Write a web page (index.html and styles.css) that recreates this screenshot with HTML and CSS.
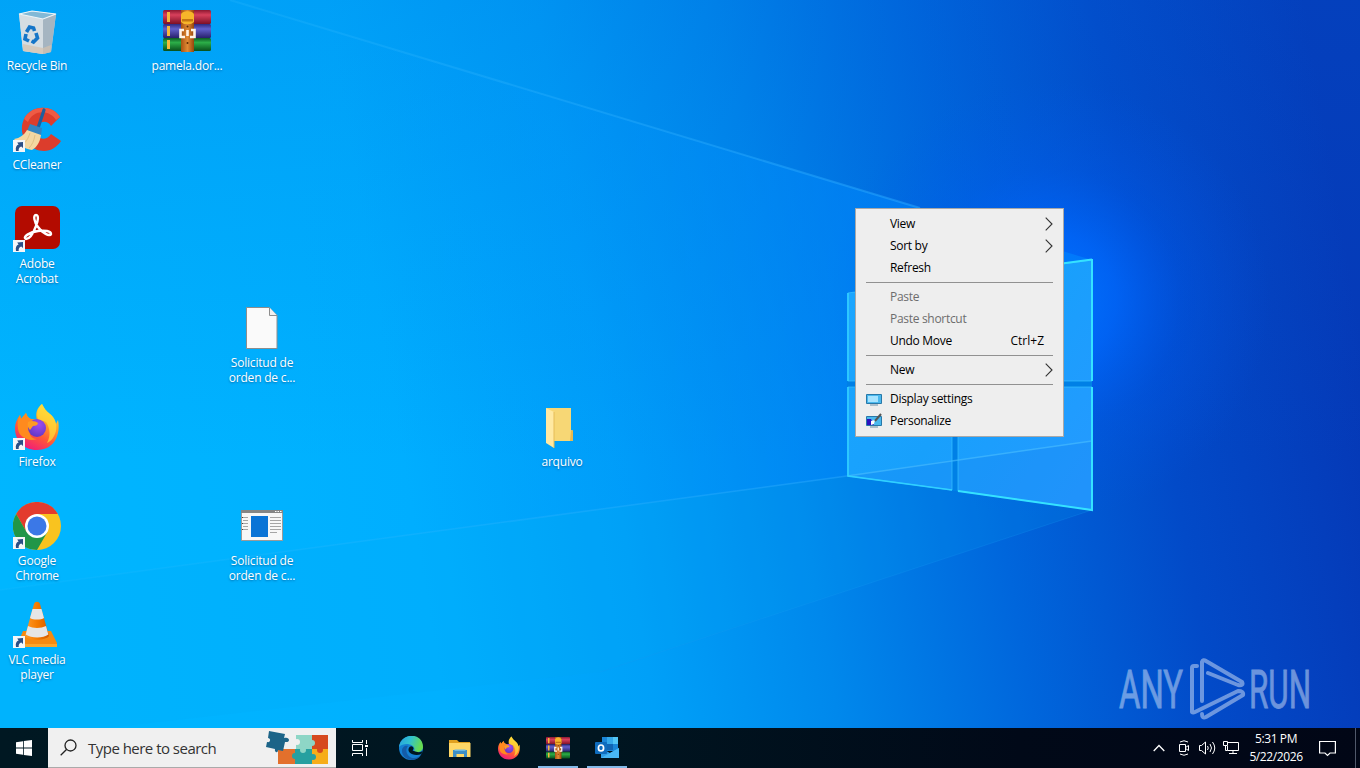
FILE: index.html
```html
<!DOCTYPE html>
<html lang="en">

<head>
    <meta charset="UTF-8">
    <meta name="viewport" content="width=device-width, initial-scale=1.0">
    <title>Desktop</title>

    <link rel="stylesheet" href="styles.css">
</head>

<body>
    <!-- shared icons -->
    <svg class="defs" width="0" height="0">
        <defs>
            <linearGradient id="ffBody" x1="0.8" y1="0" x2="0.3" y2="1">
                <stop offset="0" stop-color="#fff044" />
                <stop offset="0.35" stop-color="#ffa726" />
                <stop offset="0.65" stop-color="#ff5a36" />
                <stop offset="1" stop-color="#f0197d" />
            </linearGradient>
            <radialGradient id="ffGlobe" cx="0.6" cy="0.3" r="0.8">
                <stop offset="0" stop-color="#a04cf0" />
                <stop offset="1" stop-color="#5b36c0" />
            </radialGradient>
            <linearGradient id="rarRed" x1="0" y1="0" x2="0" y2="1">
                <stop offset="0" stop-color="#8c1830" />
                <stop offset="0.35" stop-color="#d8405c" />
                <stop offset="1" stop-color="#7d1026" />
            </linearGradient>
            <linearGradient id="rarBlue" x1="0" y1="0" x2="0" y2="1">
                <stop offset="0" stop-color="#2e2a80" />
                <stop offset="0.35" stop-color="#6260cc" />
                <stop offset="1" stop-color="#28206c" />
            </linearGradient>
            <linearGradient id="rarGreen" x1="0" y1="0" x2="0" y2="1">
                <stop offset="0" stop-color="#0c5a24" />
                <stop offset="0.35" stop-color="#2cae48" />
                <stop offset="1" stop-color="#08501c" />
            </linearGradient>
            <linearGradient id="belt" x1="0" y1="0" x2="1" y2="0">
                <stop offset="0" stop-color="#a85212" />
                <stop offset="0.5" stop-color="#e08a34" />
                <stop offset="1" stop-color="#97450c" />
            </linearGradient>
            <linearGradient id="cone" x1="0" y1="0" x2="1" y2="0">
                <stop offset="0" stop-color="#ff9a2a" />
                <stop offset="0.5" stop-color="#f57c00" />
                <stop offset="1" stop-color="#d45c00" />
            </linearGradient>
        </defs>

        <symbol id="firefox" viewBox="0 0 48 48">
            <path d="M29 1c2 4 4 7 8 10 4 3 5 7 6 10l2-4c3 15-4 30-21 30C10 47 2 37 2 25c0-5 2-9 5-13l1 4 5-6c1 3 2 5 5 6l6 1c-2-7 0-12 5-16z" fill="url(#ffBody)" />
            <path d="M7 12l1 4 5-6c1 3 2 5 5 6l6 1-6 5c-4 8 0 14 6 14-9 3-18-2-19-10-1-6 0-10 2-14z" fill="#ff8a1e" />
            <circle cx="24" cy="25" r="9" fill="url(#ffGlobe)" />
            <path d="M15 19c3-2 8-1 10 1 0 2-2 3-5 3l-3 4c-2-2-3-5-2-8z" fill="#ff9b22" />
            <path d="M29 1c2 4 4 7 8 10 5 4 7 9 6 17-2 7-5 10-9 12 4-7 3-15-1-21l-8-3C23 10 25 5 29 1z" fill="#ffd938" opacity="0.75" />
        </symbol>

        <symbol id="winrar" viewBox="0 0 48 42" preserveAspectRatio="none">
            <rect x="0" y="0" width="48" height="14" rx="1.5" fill="url(#rarRed)" />
            <rect x="0" y="14" width="48" height="14" rx="1.5" fill="url(#rarBlue)" />
            <rect x="0" y="28" width="48" height="13" rx="1.5" fill="url(#rarGreen)" />
            <path d="M4 2h3v10H4zM4 16h3v10H4zM4 30h3v9H4z" fill="#f5b83c" />
            <rect x="18" y="0" width="13" height="42" fill="url(#belt)" />
            <path d="M18 12V5c0-5 13-5 13 0v7l-3 2h-7z" fill="#f7b52a" />
            <path d="M19 9h11v2.500H19z" fill="#c47712" />
            <circle cx="24.5" cy="16.500" r="1" fill="#5b2a05" />
            <path d="M21 20h-3.500v7h4.500M28 20h3.500v7H27M24.500 20v6" fill="none" stroke="#fff3e6" stroke-width="2.600" />
            <circle cx="24.500" cy="33" r="1" fill="#5b2a05" />
        </symbol>

        <symbol id="shortcut" viewBox="0 0 12 12">
            <rect width="12" height="12" fill="#f4f6f8" />
            <path d="M3 11C2.300 7.500 3.300 5.300 5.600 4.500L4.200 2.500 10 2v6L8.300 6.600C6.500 7.200 5.400 8.500 5.700 11z" fill="#2b4f86" />
        </symbol>

        <symbol id="arrow" viewBox="0 0 8 14">
            <path d="M0.700 0.700L7 7 0.700 13.300" fill="none" stroke="#333" stroke-width="1.100" />
        </symbol>
    </svg>

    <div class="desktop">
        <svg class="wallpaper" viewBox="0 0 1360 768" preserveAspectRatio="none">
            <defs>
                <linearGradient id="sky" gradientUnits="userSpaceOnUse" x1="0" y1="560" x2="1360" y2="330">
                    <stop offset="0" stop-color="#00b6ff" />
                    <stop offset="0.3" stop-color="#00b0ff" />
                    <stop offset="0.45" stop-color="#00a0f8" />
                    <stop offset="0.58" stop-color="#0088ec" />
                    <stop offset="0.72" stop-color="#0066dc" />
                    <stop offset="0.85" stop-color="#024ac8" />
                    <stop offset="1" stop-color="#0538b6" />
                </linearGradient>
                <linearGradient id="topShade" x1="0" y1="0" x2="0" y2="1">
                    <stop offset="0" stop-color="#0060d8" stop-opacity="0.2" />
                    <stop offset="0.6" stop-color="#0060d8" stop-opacity="0" />
                </linearGradient>
                <radialGradient id="glow" gradientUnits="userSpaceOnUse" cx="1050" cy="300" r="220">
                    <stop offset="0" stop-color="#0074ff" />
                    <stop offset="0.3" stop-color="#0068ff" stop-opacity="0.75" />
                    <stop offset="0.6" stop-color="#005cf4" stop-opacity="0.3" />
                    <stop offset="1" stop-color="#0058e8" stop-opacity="0" />
                </radialGradient>
                <linearGradient id="beam" gradientUnits="userSpaceOnUse" x1="300" y1="0" x2="900" y2="0">
                    <stop offset="0" stop-color="#0098ff" stop-opacity="0" />
                    <stop offset="0.6" stop-color="#0094ff" stop-opacity="0.25" />
                    <stop offset="1" stop-color="#0088ff" stop-opacity="0.55" />
                </linearGradient>
                <linearGradient id="ray" gradientUnits="userSpaceOnUse" x1="50" y1="0" x2="900" y2="0">
                    <stop offset="0" stop-color="#3cc4ff" stop-opacity="0.1" />
                    <stop offset="1" stop-color="#2aa8ff" stop-opacity="0.5" />
                </linearGradient>
                <linearGradient id="pane" gradientUnits="userSpaceOnUse" x1="847" y1="300" x2="1092" y2="470">
                    <stop offset="0" stop-color="#1ba6ff" />
                    <stop offset="0.5" stop-color="#18a0fc" />
                    <stop offset="1" stop-color="#249aff" />
                </linearGradient>
            </defs>
            <rect width="1360" height="768" fill="url(#sky)" />
            <rect width="1360" height="768" fill="url(#topShade)" />
            <circle cx="1050" cy="300" r="220" fill="url(#glow)" />
            <path d="M230 0L920 208 1092 260V510L847 476 0 590V0z" fill="url(#beam)" />
            <path d="M847 476L1092 510 600 672 0 740V590z" fill="#00a8f4" opacity="0.16" />
            <path d="M230 0L920 208" stroke="url(#ray)" stroke-width="2" fill="none" />
            <path d="M847 476L0 590" stroke="url(#ray)" stroke-width="1.500" fill="none" />
            <path d="M1092 510L600 672" stroke="#189cf4" stroke-width="1" opacity="0.25" fill="none" />
            <path d="M847 293L1092 259V510L847 476z" fill="#0080e6" />
            <path d="M847 293L952 279V381H847zM958 278L1092 259V381H958zM847 387H952V490L847 476zM958 387H1092V510L958 491z" fill="url(#pane)" />
            <path d="M847 476L952 460V490zM958 460L1092 441V510L958 491z" fill="#1680f0" opacity="0.28" />
            <path d="M847 476L1092 441" stroke="#4cc0ff" stroke-width="1.500" opacity="0.6" />
            <path d="M848 381V293L952 279V381zM958 278L1092 260V381H958zM848 387H952V490L848 476zM958 387H1092V510L958 491z" fill="none" stroke="#38c0ff" stroke-width="1" opacity="0.7" />
            <path d="M1092 259V381M1092 387V510L958 491M1062 263.500L1092 259.500" fill="none" stroke="#35e2ff" stroke-width="2" />
            <path d="M848 293V381M848 387V476L952 490" fill="none" stroke="#30d0ff" stroke-width="1.500" />
        </svg>

        <div class="icons">
            <div class="icon c1 r1">
                <svg class="pic" viewBox="0 0 48 48">
                    <path d="M6 7l13-3 24 3-5 38-8 2-20-3z" fill="#c3d3de" />
                    <path d="M6 7l24 5v35l-20-3z" fill="#d5dde2" />
                    <path d="M30 12l13-5-5 38-8 2z" fill="#a5b5c1" />
                    <path d="M6 7l13-3 24 3-13 5z" fill="#82b9d6" stroke="#eef5f8" stroke-width="1.200" />
                    <path d="M10 37l20 4 8-3-.500 7-7.500 2-20-3z" fill="#d4c2ae" opacity="0.7" />
                    <path d="M13.500 25l3-5 4 1 1 3M23 26l1.500 5-4 4-2-1M16 34l-4-2 1-5" fill="none" stroke="#1475c8" stroke-width="3.600" />
                </svg>
                <span>Recycle Bin</span>
            </div>
            <div class="icon c3 r1">
                <svg class="pic rar"><use href="#winrar" /></svg>
                <span>pamela.dor...</span>
            </div>
            <div class="icon c1 r2">
                <svg class="pic" viewBox="0 0 48 48">
                    <path d="M47 11C39-2 18-1 11 13c-7 15 4 32 20 32 7 0 13-4 17-10l-10-7c-6 9-16 4-15-4 1-9 11-11 15-4z" fill="#dc3d2c" />
                    <path d="M47 11C39-2 18-1 11 13l4 3C20 4 36 3 43 14z" fill="#ee5b45" />
                    <path d="M31 4l-6 18" stroke="#1d5f9e" stroke-width="3.200" stroke-linecap="round" />
                    <path d="M17 18l12 4-1 8-14-5z" fill="#3285c2" />
                    <path d="M14 24l14 5c-1 7-4 12-9 15C12 43 6 39 1 33c6-1 10-4 13-9z" fill="#f4d7a2" />
                    <path d="M17 27c-2 6-4 9-8 12M22 29c-1 6-3 10-6 13" stroke="#e2c084" fill="none" />
                    <use href="#shortcut" x="0" y="34" width="12" height="12" />
                </svg>
                <span>CCleaner</span>
            </div>
            <div class="icon c1 r3">
                <svg class="pic" viewBox="0 0 48 48">
                    <rect x="2" y="1" width="45" height="43" rx="7" fill="#b30b00" />
                    <path d="M23 10c3 0 2 6 0 11-3 8-7 13-10 13-4-2 4-7 12-8 7-1 13 0 13 3-1 3-9-1-13-7-4-5-5-12-2-12z" fill="none" stroke="#fff" stroke-width="2.400" />
                    <use href="#shortcut" x="0" y="35" width="12" height="12" />
                </svg>
                <span>Adobe<br>Acrobat</span>
            </div>
            <div class="icon c4 r4">
                <svg class="pic" viewBox="0 0 48 48">
                    <path d="M8.500 3.500H31l8 8v33H8.500z" fill="#fafafa" stroke="#8d8d8d" />
                    <path d="M31.500 3.500V11.500H39" fill="#f0f0f0" stroke="#8d8d8d" />
                </svg>
                <span>Solicitud de<br>orden de c...</span>
            </div>
            <div class="icon c1 r5">
                <svg class="pic" viewBox="0 0 48 48">
                    <use href="#firefox" width="48" height="48" />
                    <use href="#shortcut" x="0" y="35" width="12" height="12" />
                </svg>
                <span>Firefox</span>
            </div>
            <div class="icon c8 r5">
                <svg class="pic" viewBox="0 0 48 48">
                    <path d="M8 5h25v22l2 1v10H14z" fill="#f7d775" />
                    <path d="M33 28l2-1v11h-3z" fill="#e8b94e" />
                    <path d="M8 5l8 4v36l-8-5z" fill="#ffe9a2" />
                    <path d="M16 9v36" stroke="#e6bd58" />
                </svg>
                <span>arquivo</span>
            </div>
            <div class="icon c1 r6">
                <svg class="pic" viewBox="0 0 48 48">
                    <circle cx="24" cy="24" r="24" fill="#f9c31f" />
                    <path d="M24 12h20.800A24 24 0 0 0 3.200 12L13.600 30z" fill="#e33b2e" />
                    <path d="M3.200 12A24 24 0 0 0 24 48L34.400 30H13.600z" fill="#219648" />
                    <circle cx="24" cy="24" r="12" fill="#fff" />
                    <circle cx="24" cy="24" r="9.500" fill="#3b78e7" />
                    <use href="#shortcut" x="0" y="35" width="12" height="12" />
                </svg>
                <span>Google<br>Chrome</span>
            </div>
            <div class="icon c4 r6">
                <svg class="pic" viewBox="0 0 48 48">
                    <rect x="3.500" y="8.500" width="41" height="30" fill="#f7f7f7" stroke="#9a9a9a" />
                    <path d="M3 8h42v3H3z" fill="#858585" />
                    <path d="M37 9.500h1.500m1 0H41m1 0h1.500" stroke="#fff" />
                    <rect x="13" y="14" width="17" height="21" fill="#0a74d6" />
                    <path d="M5 15.500h5M5 18.500h5M5 21.500h5M5 24.500h5M5 27.500h5M32 15.500h11M32 18.500h11M32 21.500h11M32 24.500h11M32 27.500h11M32 30.500h7" stroke="#a5a5a5" />
                    <path d="M4 15h1v1H4zM4 21h1v1H4zM4 27h1v1H4z" fill="#444" />
                </svg>
                <span>Solicitud de<br>orden de c...</span>
            </div>
            <div class="icon c1 r7">
                <svg class="pic" viewBox="0 0 48 48">
                    <path d="M10 30h28l6 12v4H5v-4z" fill="#f58a12" />
                    <path d="M5 43h39v3H5z" fill="#fba62c" />
                    <path d="M21 3c1-3 5-3 6 0l9 32c-4 5-20 5-24 0z" fill="url(#cone)" />
                    <path d="M19.500 8h9l2.500 9c-3 2-11 2-14 0zM15 25c5 2.500 13 2.500 18 0l2.300 8.500c-5 4-17 4-22.600 0z" fill="#e6e6e6" />
                    <use href="#shortcut" x="0" y="35" width="12" height="12" />
                </svg>
                <span>VLC media<br>player</span>
            </div>
        </div>

        <svg class="watermark" viewBox="0 0 210 80">
            <text x="0" y="51" textLength="64" lengthAdjust="spacingAndGlyphs">ANY</text>
            <text x="130" y="51" textLength="62" lengthAdjust="spacingAndGlyphs">RUN</text>
            <g fill="none" stroke-width="4" stroke-linejoin="round" stroke-linecap="round">
                <path d="M78 9h-3q-2 0-2 2V55q1 1 3 0L119 34q6 0 5 4L87 60q-4 2-4-3M83 44V5q1-3 4-1L123 25q2 4-4 3L89 16" />
            </g>
        </svg>

        <div class="contextMenu">
            <div class="item"><span>View</span><svg class="more"><use href="#arrow" /></svg></div>
            <div class="item"><span>Sort by</span><svg class="more"><use href="#arrow" /></svg></div>
            <div class="item"><span>Refresh</span></div>
            <hr>
            <div class="item disabled"><span>Paste</span></div>
            <div class="item disabled"><span>Paste shortcut</span></div>
            <div class="item"><span>Undo Move</span><span class="key">Ctrl+Z</span></div>
            <hr>
            <div class="item"><span>New</span><svg class="more"><use href="#arrow" /></svg></div>
            <hr>
            <div class="item">
                <svg class="itemIcon" viewBox="0 0 16 16">
                    <path d="M.500 3.500h15v9H.500z" fill="#4ab8ee" stroke="#2878a8" />
                    <path d="M2 5h10v6H2z" fill="#a6e3ff" />
                    <path d="M4 14h8" stroke="#6a8fa8" />
                </svg>
                <span>Display settings</span>
            </div>
            <div class="item">
                <svg class="itemIcon" viewBox="0 0 16 16">
                    <path d="M.500 3.500h15v9H.500z" fill="#4ab8ee" stroke="#2878a8" />
                    <path d="M1 6h4l3 6H1z" fill="#2a10c0" />
                    <path d="M5 8l4-1-1 4-3 1z" fill="#fff" />
                    <path d="M9 8l6-7" stroke="#555" stroke-width="2" />
                    <path d="M4 14h8" stroke="#6a8fa8" />
                </svg>
                <span>Personalize</span>
            </div>
        </div>
    </div>

    <div class="taskbar">
        <div class="start">
            <svg width="16" height="16" viewBox="0 0 16 16">
                <path d="M0 2.200l7-1V7.600H0zM7.800 1.100L16 0v7.600H7.800zM0 8.400h7v6.400l-7-1zM7.800 8.400H16V16l-8.200-1.100z" fill="#fff" />
            </svg>
        </div>
        <div class="search">
            <svg class="lens" width="17" height="17" viewBox="0 0 17 17">
                <circle cx="10.500" cy="6.500" r="5.500" fill="none" stroke="#222" stroke-width="1.300" />
                <path d="M6.500 10.500L.700 16.300" stroke="#222" stroke-width="1.300" />
            </svg>
            <span>Type here to search</span>
            <svg class="puzzle" width="64" height="36" viewBox="0 0 64 36">
                <path d="M30 5h17v15H30z" fill="#8ed6c6" />
                <path d="M46 5h16v15H46z" fill="#d6491e" />
                <path d="M12 19h17v15H12z" fill="#e3702c" />
                <path d="M29 19h17v15H29z" fill="#26a0a0" />
                <path d="M46 19h16v15H46z" fill="#f6ad1a" />
                <circle cx="46" cy="13" r="3" fill="#8ed6c6" />
                <circle cx="37" cy="20" r="3" fill="#8ed6c6" />
                <circle cx="54" cy="20" r="3" fill="#d6491e" />
                <circle cx="29" cy="26" r="3" fill="#26a0a0" />
                <circle cx="47" cy="27" r="3" fill="#26a0a0" />
                <circle cx="31" cy="12" r="3" fill="#f0f0f0" />
                <path d="M3 1l16 3-1 4c6-2 7 5 1 4l-2 9-5-1c0 4-4 2-3-1l-9-2 1-5c4 1 4-4 1-4z" fill="#1c6488" />
            </svg>
        </div>
        <div class="apps">
            <div class="app taskView">
                <svg width="18" height="18" viewBox="0 0 18 18" fill="none" stroke="#fff">
                    <path d="M1.500 1v2.500h10V1M1.500 17v-2.500h10V17M1.500 5.500h10v6h-10zM15.500 1v4M15.500 9v8" />
                    <path d="M14 6h3v2h-3z" fill="#fff" stroke="none" />
                </svg>
            </div>
            <div class="app">
                <svg width="24" height="24" viewBox="0 0 24 24">
                    <defs>
                        <linearGradient id="edgeTop" x1="0" y1="0" x2="1" y2="0.300">
                            <stop offset="0" stop-color="#269fe0" />
                            <stop offset="0.500" stop-color="#30c2d0" />
                            <stop offset="1" stop-color="#67dc50" />
                        </linearGradient>
                    </defs>
                    <circle cx="12" cy="12" r="12" fill="#1480d2" />
                    <path d="M0 11C2-4 24-4 24 11c0 5-6 6-9 4 3-6-9-10-15-4z" fill="url(#edgeTop)" />
                    <path d="M9 10c-4 5 0 12 6 12 3 0 5-1 7-3-4 7-15 6-18 0-3-6 1-10 5-9z" fill="#145ca8" />
                    <path d="M15 15c-2 0-1-1-.500-2 .500-2-2-4-4-2-4 5 4 10 12 7l1-3c-3 2-6 1-8.500 0z" fill="#001720" />
                </svg>
            </div>
            <div class="app">
                <svg width="22" height="19" viewBox="0 0 22 19">
                    <path d="M0 1h8l2 2h11v5H0z" fill="#e0a020" />
                    <path d="M0 4h21.500v14H0z" fill="#ffd766" />
                    <path d="M4 18v-7h14v7h-3v-3H7.500v3z" fill="#3d8fc6" />
                    <path d="M5.500 10.500h11V12h-11z" fill="#6bb9e3" />
                </svg>
            </div>
            <div class="app"><svg width="24" height="24"><use href="#firefox" /></svg></div>
            <div class="app open"><svg width="24" height="22"><use href="#winrar" /></svg></div>
            <div class="app open">
                <svg width="24" height="22" viewBox="0 0 24 22">
                    <path d="M7 0h16v14H7z" fill="#1a86d8" />
                    <path d="M12 0h6v7h-6z" fill="#34a8ea" />
                    <path d="M18 0h5v7h-5z" fill="#53c6f6" />
                    <path d="M12 7h6v6h-6z" fill="#1065b4" />
                    <path d="M6 11l9 5 9-5v10H6z" fill="#2f9de6" />
                    <path d="M6 21l18-10v10z" fill="#49b7f4" />
                    <rect x="0" y="5" width="12" height="12" rx="1" fill="#0f6cbd" />
                    <ellipse cx="6" cy="11" rx="2.600" ry="3" fill="none" stroke="#fff" stroke-width="1.700" />
                </svg>
            </div>
        </div>
        <div class="tray">
            <svg width="12" height="8" viewBox="0 0 12 8"><path d="M.700 7L6 1.500 11.300 7" fill="none" stroke="#fff" stroke-width="1.300" /></svg>
            <svg class="meet" width="12" height="16" viewBox="0 0 12 16" fill="none" stroke="#fff">
                <path d="M1.500 4.500h6v7h-6zM7.500 7.500l3-2v5l-3-2M2 2q4-2.500 8 0M2 14q4 2.500 8 0" />
            </svg>
            <svg class="sound" width="17" height="14" viewBox="0 0 17 14" fill="none" stroke="#fff">
                <path d="M.500 4.500h2l4-3.500v12l-4-3.500h-2zM8.500 5q1.500 2 0 4M11 3q3 4 0 8M13.500 1q4.500 6 0 12" />
            </svg>
            <svg class="net" width="17" height="14" viewBox="0 0 17 14" fill="none" stroke="#fff">
                <path d="M5 1.500h10.500v8H4.500V5M10 9.500v3M6 12.500h8M.500.500h4v4h-4zM2.500 4.500v5h2" />
            </svg>
            <div class="clock">5:31 PM<br>5/22/2026</div>
            <svg width="17" height="17" viewBox="0 0 17 17"><path d="M.600 1.500h15.800v11.500H11L8.500 15.500 6 13H.600z" fill="none" stroke="#fff" stroke-width="1.200" /></svg>
        </div>
    </div>
</body>

</html>
```
FILE: styles.css
```css
body {
    margin: 0;
    width: 1360px;
    height: 768px;
    overflow: hidden;
    display: flex;
    flex-direction: column;
    background-color: #00a0f8;
    font-family: "Open Sans", "Noto Sans", sans-serif;
    font-size: 12px;
}

.defs {
    position: absolute;
}

.desktop {
    position: relative;
    flex: 1;
}

.wallpaper {
    position: absolute;
    top: 0;
    left: 0;
    width: 1360px;
    height: 768px;
}

/* desktop icons snap to a 75 x 99 grid */
.icons {
    position: relative;
    display: grid;
    grid-template-columns: repeat(18, 75px);
    grid-template-rows: repeat(7, 99px);
}

.icon {
    display: flex;
    flex-direction: column;
    align-items: center;
    padding: 7px 1px 0 0;
    box-sizing: border-box;
    color: white;
    line-height: 15px;
    text-align: center;
    white-space: nowrap;
    letter-spacing: -0.2px;
    text-shadow: 0 1px 2px rgba(0, 50, 100, 0.5);
}

.icon span {
    margin-top: 3px;
}

.pic {
    width: 48px;
    height: 48px;
}

.rar {
    height: 42px;
    margin: 3px 0;
}

.c1 { grid-column: 1; }
.c3 { grid-column: 3; }
.c4 { grid-column: 4; }
.c8 { grid-column: 8; }

.r1 { grid-row: 1; }
.r2 { grid-row: 2; }
.r3 { grid-row: 3; }
.r4 { grid-row: 4; }
.r5 { grid-row: 5; }
.r6 { grid-row: 6; }
.r7 { grid-row: 7; }

.watermark {
    position: absolute;
    left: 1119px;
    top: 657px;
    width: 210px;
    height: 80px;
    overflow: visible;
    opacity: 0.5;
    fill: #d5e2f7;
    stroke: #d5e2f7;
}

.watermark text {
    font-family: Roboto, sans-serif;
    font-size: 53px;
    stroke-width: 0.8px;
}

.contextMenu {
    position: absolute;
    left: 855px;
    top: 208px;
    width: 209px;
    height: 229px;
    box-sizing: border-box;
    padding: 4px 10px;
    border: 1px solid #a8a8a8;
    background-color: #eeeeee;
    letter-spacing: -0.3px;
}

.contextMenu hr {
    margin: 3px 0;
    border: 0;
    height: 1px;
    background-color: #919191;
}

.item {
    position: relative;
    display: flex;
    align-items: center;
    height: 22px;
    padding-left: 24px;
}

.item span {
    padding-bottom: 2px;
}

.itemIcon {
    position: absolute;
    left: 0;
    width: 16px;
    height: 16px;
}

.more {
    width: 8px;
    height: 14px;
    margin-left: auto;
}

.key {
    margin-left: auto;
    margin-right: 9px;
    letter-spacing: 0;
}

.disabled {
    color: #6d6d6d;
}

.taskbar {
    position: relative;
    display: flex;
    height: 40px;
    background: linear-gradient(to right, #001822, #001520 45%, #010918 75%, #010616);
}

.start {
    display: flex;
    align-items: center;
    justify-content: center;
    width: 48px;
}

.search {
    display: flex;
    align-items: center;
    width: 288px;
    box-sizing: border-box;
    padding-left: 12px;
    border-bottom: 1px solid #aaa;
    background-color: #f0f0f0;
    color: #333;
    font-size: 15px;
    letter-spacing: -0.52px;
}

.search span {
    margin-left: 11px;
    white-space: nowrap;
}

.puzzle {
    margin-left: auto;
    margin-right: 6px;
}

.apps {
    display: flex;
    gap: 9px;
    margin-left: 6px;
}

.app {
    display: flex;
    align-items: center;
    justify-content: center;
    width: 40px;
    box-sizing: border-box;
}

.taskView {
    padding-right: 4px;
}

.open {
    border-bottom: 2px solid #83b9e8;
    padding-top: 2px;
}

.tray {
    display: flex;
    align-items: center;
    margin-left: auto;
    padding-right: 19px;
    margin-right: 4px;
    border-right: 1px solid #50586a;
    color: white;
}

.meet {
    margin-left: 13px;
}

.sound {
    margin-left: 9px;
}

.net {
    margin-left: 7px;
}

.clock {
    width: 70px;
    margin: 0 8px 0 1px;
    line-height: 18px;
    text-align: center;
    letter-spacing: -0.4px;
}
```
